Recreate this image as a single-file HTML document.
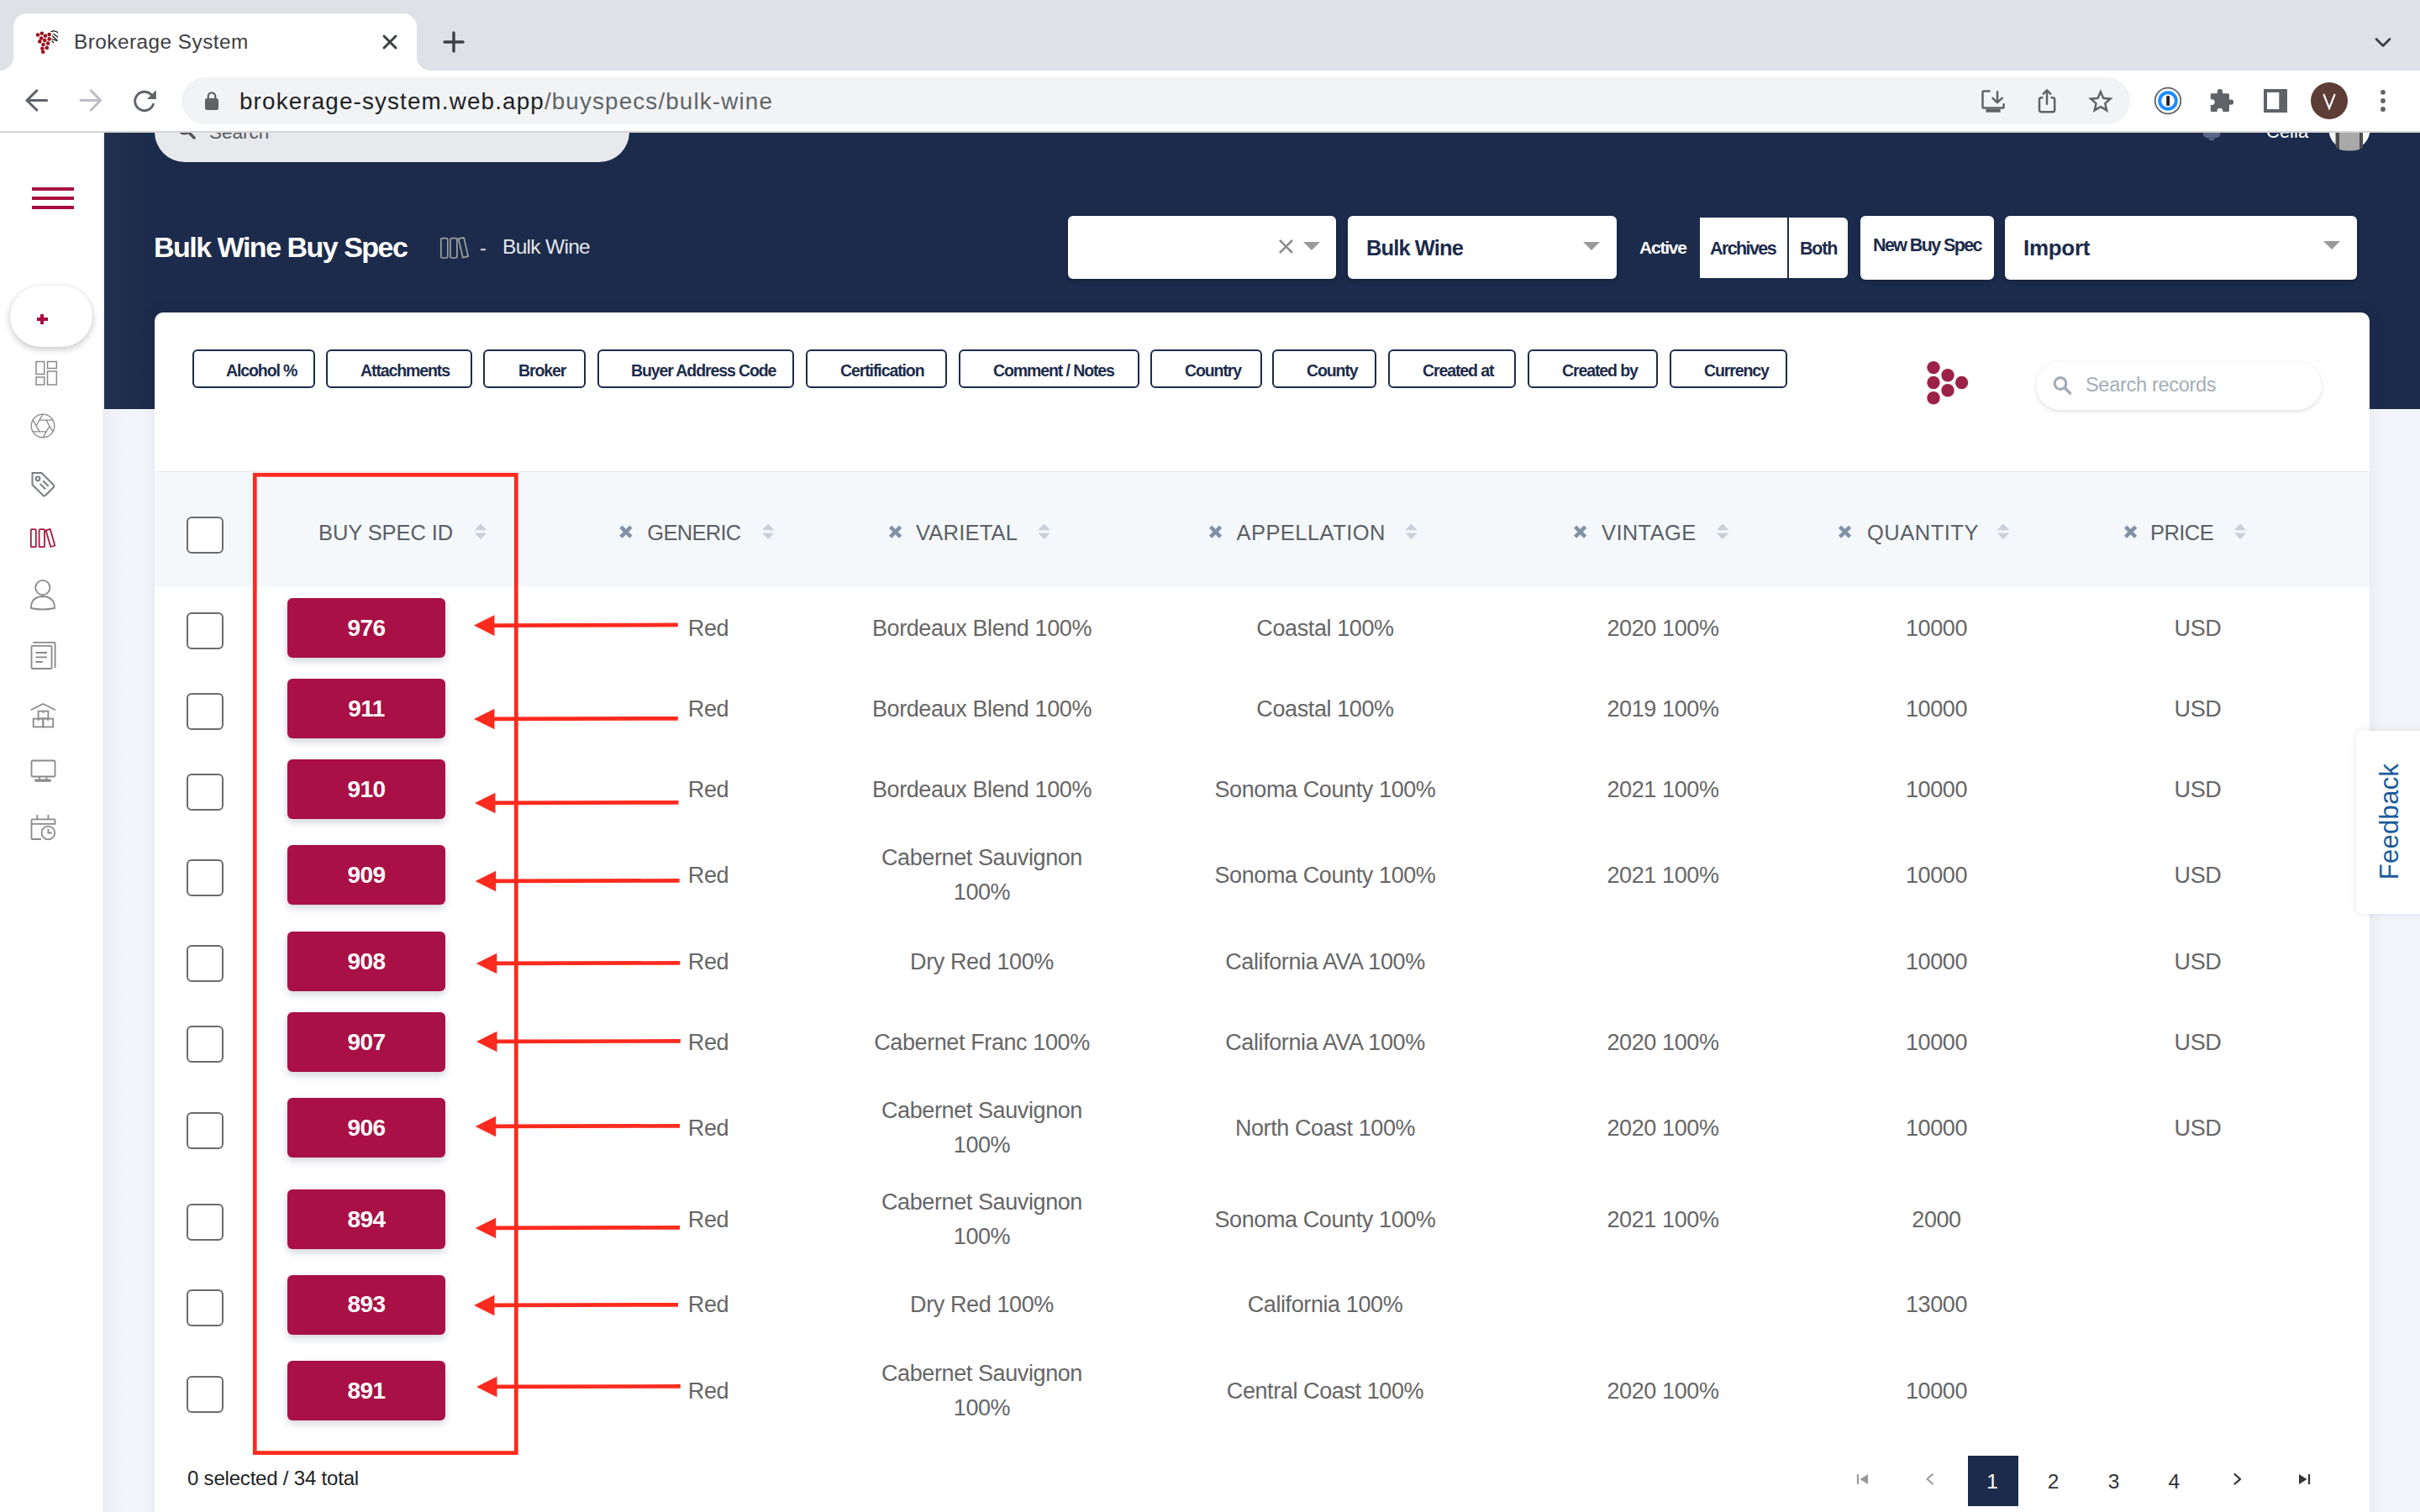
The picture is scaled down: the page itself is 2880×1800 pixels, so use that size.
<!DOCTYPE html>
<html><head><meta charset="utf-8"><title>Brokerage System</title>
<style>
*{box-sizing:border-box;margin:0;padding:0}
html,body{width:2880px;height:1800px;overflow:hidden;background:#fff;font-family:"Liberation Sans",sans-serif}
.a{position:absolute}
.t{position:absolute;white-space:nowrap;line-height:1}
svg{position:absolute;overflow:visible}
</style></head><body>

<!-- ===== CHROME TAB BAR ===== -->
<div class="a" style="left:0;top:0;width:2880px;height:84px;background:#dee1e6"></div>
<div class="a" style="left:16px;top:16px;width:480px;height:68px;background:#fff;border-radius:16px 16px 0 0"></div>
<!-- tab inverse corners -->
<div class="a" style="left:0;top:68px;width:16px;height:16px;background:#fff"></div>
<div class="a" style="left:0;top:68px;width:16px;height:16px;background:#dee1e6;border-radius:0 0 16px 0"></div>
<div class="a" style="left:496px;top:68px;width:16px;height:16px;background:#fff"></div>
<div class="a" style="left:496px;top:68px;width:16px;height:16px;background:#dee1e6;border-radius:0 0 0 16px"></div>

<!-- ===== CHROME TOOLBAR ===== -->
<div class="a" style="left:0;top:84px;width:2880px;height:72px;background:#fff"></div>
<div class="a" style="left:0;top:156px;width:2880px;height:2px;background:#d3d4d6"></div>
<div class="a" style="left:216px;top:92px;width:2319px;height:56px;background:#f1f3f4;border-radius:28px"></div>


<!-- chrome icons -->
<svg style="left:0;top:0" width="2880" height="158" viewBox="0 0 2880 158">
 <g fill="#99121f">
  <circle cx="45" cy="41.5" r="2.3"/><circle cx="49.8" cy="39.8" r="2.3"/><circle cx="53.9" cy="42.7" r="2.3"/><circle cx="58.6" cy="41" r="2.3"/>
  <circle cx="49.1" cy="45.5" r="2.3"/><circle cx="53.2" cy="48" r="2.3"/><circle cx="58.6" cy="46.4" r="2.3"/>
  <circle cx="47.3" cy="49.4" r="2.3"/><circle cx="51.5" cy="53" r="2.3"/><circle cx="57" cy="51.6" r="2.3"/>
  <circle cx="50.4" cy="57.8" r="2.3"/><circle cx="55.7" cy="56.9" r="2.3"/><circle cx="51.2" cy="61.7" r="2.3"/>
 </g>
 <g stroke="#111" stroke-width="1.3" fill="none" stroke-linecap="round">
  <path d="M61 37.5 Q65 36 68.5 38.5"/><path d="M64 40.5 L68.5 44"/><path d="M62.5 43 L68 48"/><path d="M62 46.5 L67.5 48.5"/><path d="M62 49 L63.5 50.5"/>
 </g>
 <text x="88" y="58" font-family="Liberation Sans" font-size="24.3" letter-spacing="0.5" fill="#3c4043">Brokerage System</text>
 <g stroke="#3c4043" stroke-width="3" stroke-linecap="round">
  <path d="M457 43 L471 57 M471 43 L457 57"/>
 </g>
 <g stroke="#3c4043" stroke-width="3.4" stroke-linecap="round">
  <path d="M540 39 V61 M529 50 H551"/>
 </g>
 <path d="M2828 46.5 L2836 54.5 L2844 46.5" stroke="#3c4043" stroke-width="2.8" fill="none" stroke-linecap="round" stroke-linejoin="round"/>
 <!-- nav -->
 <g stroke="#5f6368" stroke-width="3.1" fill="none" stroke-linecap="round" stroke-linejoin="round">
  <path d="M55.6 119.5 H32 M43.8 107.9 L32 119.5 L43.8 131"/>
 </g>
 <g stroke="#bcbec1" stroke-width="3.1" fill="none" stroke-linecap="round" stroke-linejoin="round">
  <path d="M96 119.5 H119.6 M108.3 107.9 L119.6 119.5 L108.3 131"/>
 </g>
 <path d="M182.4 124.3 A11.2 11.2 0 1 1 179.7 112.4" stroke="#5f6368" stroke-width="2.9" fill="none" stroke-linecap="round"/>
 <path d="M185.8 107.2 V117.9 H175 Z" fill="#5f6368"/>
 <!-- lock -->
 <rect x="244" y="117" width="16" height="14" rx="2.5" fill="#5f6368"/>
 <path d="M247.8 118 V114.5 A4.2 4.2 0 0 1 256.2 114.5 V118" stroke="#5f6368" stroke-width="2.3" fill="none"/>
 <text x="285" y="130" font-family="Liberation Sans" font-size="27.8" letter-spacing="1.15" fill="#202124">brokerage-system.web.app<tspan fill="#5f6368">/buyspecs/bulk-wine</tspan></text>
 <!-- download -->
 <g stroke="#5f6368" stroke-width="2.5" fill="none" stroke-linecap="butt" stroke-linejoin="round">
  <path d="M2368.6 108.5 H2361 Q2359.5 108.5 2359.5 110 V127.3 Q2359.5 128.6 2361 128.6 H2383.3 Q2384.6 128.6 2384.6 127.3 V123.3"/>
  <path d="M2377 108.2 V121.5 M2370.8 116.2 L2377 122.2 L2383.4 116.2"/>
 </g>
 <path d="M2363.5 129.8 H2380.6 V133.7 H2363.5 Z" fill="#5f6368"/>
 <!-- share -->
 <g stroke="#5f6368" stroke-width="2.5" fill="none" stroke-linecap="round" stroke-linejoin="round">
  <path d="M2430.5 116.2 H2429.5 Q2427 116.2 2427 118.7 V130.7 Q2427 133.2 2429.5 133.2 H2442.7 Q2445.2 133.2 2445.2 130.7 V118.7 Q2445.2 116.2 2442.7 116.2 H2441.6"/>
  <path d="M2436 107.6 V123.8 M2431.7 111.7 L2436 107.4 L2440.3 111.7"/>
 </g>
 <!-- star -->
 <path d="M2499.90 105.90 L2504.01 115.74 L2514.64 116.61 L2506.56 123.56 L2509.01 133.94 L2499.90 128.40 L2490.79 133.94 L2493.24 123.56 L2485.16 116.61 L2495.79 115.74 Z M2499.90 112.50 L2502.43 117.92 L2508.36 118.65 L2503.99 122.73 L2505.13 128.60 L2499.90 125.70 L2494.67 128.60 L2495.81 122.73 L2491.44 118.65 L2497.37 117.92 Z" fill="#5f6368" fill-rule="evenodd"/>
 <!-- 1password -->
 <circle cx="2580" cy="120" r="15.3" stroke="#5f6368" stroke-width="1.8" fill="#fff"/>
 <circle cx="2580" cy="120" r="9.8" stroke="#1a8cff" stroke-width="3.9" fill="#fff"/>
 <rect x="2578.2" y="114.2" width="3.8" height="11.6" fill="#222"/>
 <!-- puzzle -->
 <path d="M2632 111.2 H2638.7 V109.2 A3.2 3.2 0 0 1 2645.1 109.2 V111.2 H2651.5 Q2653 111.2 2653 112.7 V118.4 H2655 A3.2 3.2 0 0 1 2655 124.8 H2653 V131.5 Q2653 133 2651.5 133 H2645.3 V132.2 A3.4 3.4 0 0 0 2638.5 132.2 V133 H2632.3 Q2630.8 133 2630.8 131.5 V125 H2632.3 A3.4 3.4 0 0 0 2632.3 118.2 H2630.8 V112.5 Q2630.8 111.2 2632 111.2 Z" fill="#5f6368"/>
 <!-- side panel -->
 <path d="M2694 106 H2722 V134 H2694 Z M2698 110 V130 H2712.3 V110 Z" fill="#5f6368" fill-rule="evenodd"/>
 <!-- avatar -->
 <circle cx="2772" cy="120" r="22" fill="#5d3d35"/>
 <path d="M2765.3 112 L2772 128.8 L2778.7 112" stroke="#fff" stroke-width="2.2" fill="none" stroke-linecap="butt" stroke-linejoin="miter"/>
 <g fill="#5f6368"><circle cx="2836" cy="109.8" r="2.9"/><circle cx="2836" cy="120" r="2.9"/><circle cx="2836" cy="130" r="2.9"/></g>
</svg>

<!-- ===== PAGE ===== -->
<div class="a" style="left:0;top:0;width:2880px;height:1800px;clip-path:inset(158px 0 0 0)">
<div class="a" style="left:0;top:158px;width:124px;height:1642px;background:#fff"></div>
<div class="a" style="left:122px;top:158px;width:2px;height:1642px;background:#f0f1f3"></div>
<div class="a" style="left:124px;top:100px;width:2756px;height:387px;background:#1c2b4b"></div>
<div class="a" style="left:124px;top:158px;width:60px;height:329px;background:linear-gradient(90deg,#22304f,#1c2b4b)"></div>
<div class="a" style="left:124px;top:487px;width:2756px;height:1313px;background:#f4f5fa"></div>
<div class="a" style="left:124px;top:487px;width:24px;height:1313px;background:linear-gradient(90deg,rgba(20,30,70,0.035),rgba(20,30,70,0))"></div>

<!-- top search pill (clipped) -->
<div class="a" style="left:184px;top:120px;width:565px;height:73px;background:#e8e9ed;border-radius:36px"></div>
<svg style="left:0;top:0" width="2880" height="200">
 <circle cx="219.5" cy="152" r="7" stroke="#555" stroke-width="3.2" fill="none"/>
 <path d="M224.5 157.5 L231 164" stroke="#555" stroke-width="3.6" stroke-linecap="round"/>
 <text x="249" y="164.5" font-family="Liberation Sans" font-size="22.5" fill="#5a5a5a">Search</text>
 <!-- bell -->
 <path d="M2622 160 Q2622 164.5 2632 164.5 Q2642.5 164.5 2642.5 160 L2642.5 150 H2622 Z" fill="#566789"/>
 <path d="M2628 165 Q2632 170 2636 165 Z" fill="#566789"/>
 <text x="2697" y="164" font-family="Liberation Sans" font-size="22" fill="#fff">Celia</text>
 <circle cx="2796" cy="154" r="24.5" fill="#fff"/>
 <path d="M2779.5 150 H2812 V176 Q2796 181 2779.5 176 Z" fill="#4d4d4d"/>
 <path d="M2784 156 Q2796 150 2808 156 V178 Q2796 181 2784 178 Z" fill="#a9a9a9"/>
</svg>

<!-- hamburger -->
<div class="a" style="left:38px;top:223px;width:50px;height:4px;background:#a80d40"></div>
<div class="a" style="left:38px;top:234px;width:50px;height:4px;background:#a80d40"></div>
<div class="a" style="left:38px;top:245px;width:50px;height:4px;background:#a80d40"></div>
<!-- plus pill -->
<div class="a" style="left:12px;top:340px;width:98px;height:73px;background:#fff;border-radius:37px;box-shadow:0 3px 8px rgba(0,0,0,0.22),0 0 2px rgba(0,0,0,0.06)"></div>
<div class="a" style="left:44px;top:378px;width:12.7px;height:4.4px;background:#a80d40"></div>
<div class="a" style="left:48.3px;top:374px;width:4.2px;height:12px;background:#a80d40"></div>

<!-- sidebar icons -->
<svg style="left:0;top:0" width="124" height="1100">
 <g stroke="#8a8a8a" stroke-width="1.5" fill="none">
  <rect x="43" y="430.5" width="9.7" height="15"/><rect x="56.5" y="430.5" width="10.8" height="8"/>
  <rect x="43" y="449" width="9.7" height="9"/><rect x="56.5" y="442" width="10.8" height="16"/>
 </g>
 <g stroke="#8a8a8a" stroke-width="1.3" fill="none">
  <circle cx="51" cy="507" r="13.8"/>
  <path d="M51 493.2 L43.1 506.5 M62.9 500.1 L47.2 500.1 M62.9 513.9 L55 500.4 M51 520.8 L58.9 507.5 M39.1 513.9 L54.8 513.9 M39.1 500.1 L47 513.6"/>
 </g>
 <g stroke="#777c80" stroke-width="2" fill="none" stroke-linejoin="round" stroke-linecap="round">
  <path d="M38.5 563 H49.5 L64 577.5 Q65 578.7 64 579.8 L53.8 590 Q52.6 591 51.5 590 L38.5 577 Z"/>
  <circle cx="45" cy="569.8" r="2.4"/>
  <path d="M51.8 573 L57.1 578.3 M48.2 576.5 L53.6 581.9"/>
 </g>
 <g stroke="#a8173f" stroke-width="1.8" fill="none" stroke-linejoin="round">
  <rect x="36.8" y="630.2" width="6" height="21" rx="1"/>
  <rect x="46.6" y="630.2" width="6.4" height="21" rx="1"/>
  <path d="M54.6 631.3 L59.7 629.8 L65.4 649.5 L60.3 651 Z"/>
 </g>
 <g stroke="#8a8a8a" stroke-width="1.8" fill="none">
  <circle cx="50.8" cy="699.5" r="8.6"/>
  <path d="M37 724 Q36.8 710.5 50.8 710 Q65 710.5 65 724 Q51 727 37 724 Z"/>
 </g>
 <g stroke="#8a8a8a" stroke-width="1.8" fill="none">
  <rect x="37.5" y="768.8" width="24" height="27.2" rx="1.2"/>
  <path d="M39.2 764.8 H64.5 Q65.6 764.8 65.6 766 V795"/>
  <path d="M42.4 777 H56 M42.4 782.4 H56 M42.4 788 H50.8"/>
 </g>
 <g stroke="#8a8a8a" stroke-width="1.8" fill="none">
  <path d="M36.6 845.2 L51.3 837.9 L66 845.2"/>
  <rect x="45.6" y="846.6" width="11.8" height="8.8"/>
  <rect x="39.7" y="855.6" width="11.6" height="9.8"/><rect x="51.3" y="855.6" width="11.9" height="9.8"/>
  <path d="M51.5 846.6 V849 M45.5 855.6 V858 M57.2 855.6 V858"/>
 </g>
 <g stroke="#8a8a8a" stroke-width="1.8" fill="none">
  <rect x="37.5" y="905.5" width="28" height="19" rx="1.5"/>
  <path d="M47 924.4 V928 M55.4 924.4 V928"/>
 </g>
 <rect x="41" y="927.5" width="20" height="3.2" rx="1.6" fill="#8a8a8a"/>
 <g stroke="#8a8a8a" stroke-width="1.8" fill="none">
  <path d="M48.9 999 H38.5 Q37.5 999 37.5 998 V976.5 Q37.5 975.3 38.7 975.3 H64.3 Q65.5 975.3 65.5 976.5 V980.8 H37.5"/>
  <path d="M44.3 970 V975 M57.4 970 V975"/>
  <circle cx="57.4" cy="991.5" r="7.8"/>
  <path d="M57.4 987 V991.5 H61.8"/>
 </g>
</svg>

<!-- title area -->
<div class="t" style="left:183px;top:277px;font-size:34px;font-weight:700;color:#fff;letter-spacing:-1.5px">Bulk Wine Buy Spec</div>
<svg style="left:0;top:0" width="800" height="400">
 <g stroke="#9e9e9e" stroke-width="1.7" fill="none" stroke-linejoin="round">
  <rect x="524.8" y="283.6" width="8" height="23.4" rx="1.5"/>
  <rect x="536" y="283.6" width="7.9" height="23.4" rx="1.5"/>
  <path d="M545.6 284.2 L552 282.8 L557.2 305.2 L550.9 306.7 Z"/>
 </g>
 <rect x="572" y="296" width="6" height="2.2" fill="#c9ccd3"/>
</svg>
<div class="t" style="left:598px;top:282px;font-size:24.5px;color:#e4e6ea;letter-spacing:-0.7px">Bulk Wine</div>

<!-- selects -->
<div class="a" style="left:1271px;top:257px;width:319px;height:75px;background:#fff;border-radius:6px;box-shadow:0 3px 6px rgba(0,0,0,0.18)"></div>
<svg style="left:0;top:0" width="2880" height="400">
 <path d="M1523 286 L1538 301 M1538 286 L1523 301" stroke="#8c8c8c" stroke-width="2.6"/>
 <path d="M1551 288 H1571 L1561 298 Z" fill="#9a9a9a"/>
</svg>
<div class="a" style="left:1604px;top:257px;width:320px;height:75px;background:#fff;border-radius:6px;box-shadow:0 3px 6px rgba(0,0,0,0.18)"></div>
<div class="t" style="left:1626px;top:283px;font-size:25.5px;font-weight:700;color:#1c2b4b;letter-spacing:-0.9px">Bulk Wine</div>
<div class="t" style="left:1951px;top:284px;font-size:21px;font-weight:700;color:#fff;letter-spacing:-1.2px">Active</div>
<div class="a" style="left:2023px;top:259px;width:176px;height:72px;background:#fff;border-radius:0 6px 6px 0"></div>
<div class="a" style="left:2127px;top:259px;width:2px;height:72px;background:#1c2b4b"></div>
<div class="t" style="left:2035px;top:286px;font-size:21.5px;font-weight:700;color:#1c2b4b;letter-spacing:-1.6px">Archives</div>
<div class="t" style="left:2142px;top:286px;font-size:21.5px;font-weight:700;color:#1c2b4b;letter-spacing:-1.2px">Both</div>
<div class="a" style="left:2214px;top:257px;width:159px;height:76px;background:#fff;border-radius:6px;box-shadow:0 3px 6px rgba(0,0,0,0.18)"></div>
<div class="t" style="left:2229px;top:282px;font-size:21.5px;font-weight:700;color:#1c2b4b;letter-spacing:-1.6px">New Buy Spec</div>
<div class="a" style="left:2386px;top:257px;width:419px;height:76px;background:#fff;border-radius:6px;box-shadow:0 3px 6px rgba(0,0,0,0.18)"></div>
<div class="t" style="left:2408px;top:282px;font-size:26px;font-weight:700;color:#1c2b4b;letter-spacing:-0.3px">Import</div>
<svg style="left:0;top:0" width="2880" height="400">
 <path d="M2765 287 H2785 L2775 297 Z" fill="#9a9a9a"/>
 <path d="M1884 288 H1904 L1894 298 Z" fill="#9a9a9a"/>
</svg>

<!-- card -->
<div class="a" style="left:184px;top:372px;width:2636px;height:1500px;background:#fff;border-radius:10px;box-shadow:0 0 22px rgba(20,30,70,0.07)"></div>
<div class="a" style="left:184px;top:561px;width:2636px;height:2px;background:#e4e8ed"></div>
<div class="a" style="left:184px;top:562px;width:2636px;height:137px;background:#f5f8fb"></div>

<!-- chips -->
<div class="a" style="left:229px;top:416px;width:146px;height:46px;border:2px solid #1c2b4b;border-radius:6px"></div>
<div class="a" style="left:388px;top:416px;width:174px;height:46px;border:2px solid #1c2b4b;border-radius:6px"></div>
<div class="a" style="left:575px;top:416px;width:122px;height:46px;border:2px solid #1c2b4b;border-radius:6px"></div>
<div class="a" style="left:711px;top:416px;width:234px;height:46px;border:2px solid #1c2b4b;border-radius:6px"></div>
<div class="a" style="left:959px;top:416px;width:168px;height:46px;border:2px solid #1c2b4b;border-radius:6px"></div>
<div class="a" style="left:1141px;top:416px;width:215px;height:46px;border:2px solid #1c2b4b;border-radius:6px"></div>
<div class="a" style="left:1369px;top:416px;width:133px;height:46px;border:2px solid #1c2b4b;border-radius:6px"></div>
<div class="a" style="left:1514px;top:416px;width:124px;height:46px;border:2px solid #1c2b4b;border-radius:6px"></div>
<div class="a" style="left:1652px;top:416px;width:152px;height:46px;border:2px solid #1c2b4b;border-radius:6px"></div>
<div class="a" style="left:1818px;top:416px;width:155px;height:46px;border:2px solid #1c2b4b;border-radius:6px"></div>
<div class="a" style="left:1987px;top:416px;width:140px;height:46px;border:2px solid #1c2b4b;border-radius:6px"></div>
<div class="t" style="left:269px;top:431.5px;font-size:19.5px;font-weight:700;color:#1c2b4b;letter-spacing:-1.1px">Alcohol %</div>
<div class="t" style="left:429px;top:431.5px;font-size:19.5px;font-weight:700;color:#1c2b4b;letter-spacing:-1.1px">Attachments</div>
<div class="t" style="left:617px;top:431.5px;font-size:19.5px;font-weight:700;color:#1c2b4b;letter-spacing:-1.1px">Broker</div>
<div class="t" style="left:751px;top:431.5px;font-size:19.5px;font-weight:700;color:#1c2b4b;letter-spacing:-1.1px">Buyer Address Code</div>
<div class="t" style="left:1000px;top:431.5px;font-size:19.5px;font-weight:700;color:#1c2b4b;letter-spacing:-1.1px">Certification</div>
<div class="t" style="left:1182px;top:431.5px;font-size:19.5px;font-weight:700;color:#1c2b4b;letter-spacing:-1.1px">Comment / Notes</div>
<div class="t" style="left:1410px;top:431.5px;font-size:19.5px;font-weight:700;color:#1c2b4b;letter-spacing:-1.1px">Country</div>
<div class="t" style="left:1555px;top:431.5px;font-size:19.5px;font-weight:700;color:#1c2b4b;letter-spacing:-1.1px">County</div>
<div class="t" style="left:1693px;top:431.5px;font-size:19.5px;font-weight:700;color:#1c2b4b;letter-spacing:-1.1px">Created at</div>
<div class="t" style="left:1859px;top:431.5px;font-size:19.5px;font-weight:700;color:#1c2b4b;letter-spacing:-1.1px">Created by</div>
<div class="t" style="left:2028px;top:431.5px;font-size:19.5px;font-weight:700;color:#1c2b4b;letter-spacing:-1.1px">Currency</div>

<!-- grape logo + search records -->
<svg style="left:0;top:0" width="2880" height="600">
 <g fill="#9c2148">
  <circle cx="2301" cy="437.6" r="7.7"/><circle cx="2318" cy="446.7" r="7.7"/><circle cx="2301" cy="455.5" r="7.7"/>
  <circle cx="2334.6" cy="455.5" r="7.7"/><circle cx="2318" cy="464.7" r="7.7"/><circle cx="2301" cy="473.8" r="7.7"/>
 </g>
</svg>
<div class="a" style="left:2423px;top:430px;width:340px;height:58px;background:#fff;border-radius:29px;box-shadow:0 2px 5px rgba(0,0,0,0.12),0 0 1px rgba(0,0,0,0.08)"></div>
<svg style="left:0;top:0" width="2880" height="600">
 <circle cx="2452" cy="456.5" r="6.8" stroke="#a3adb7" stroke-width="3.2" fill="none"/>
 <path d="M2457 461.5 L2463.5 468" stroke="#a3adb7" stroke-width="3.6" stroke-linecap="round"/>
</svg>
<div class="t" style="left:2482px;top:447px;font-size:23.5px;color:#a3adb7;letter-spacing:-0.3px">Search records</div>
<!-- table header -->
<div class="a" style="left:222px;top:615px;width:44px;height:44px;border:2.2px solid #6b6b6b;border-radius:6px;background:#fff"></div>
<div class="t" style="left:379px;top:621.5px;font-size:25.5px;color:#5a5f66;letter-spacing:-0.1px">BUY SPEC ID</div>
<div class="t" style="left:770.3px;top:621.5px;font-size:25.5px;color:#5a5f66;letter-spacing:-0.7px">GENERIC</div>
<div class="t" style="left:1090px;top:621.5px;font-size:25.5px;color:#5a5f66;letter-spacing:0.2px">VARIETAL</div>
<div class="t" style="left:1471.5px;top:621.5px;font-size:25.5px;color:#5a5f66;letter-spacing:0.45px">APPELLATION</div>
<div class="t" style="left:1906px;top:621.5px;font-size:25.5px;color:#5a5f66;letter-spacing:0.37px">VINTAGE</div>
<div class="t" style="left:2222px;top:621.5px;font-size:25.5px;color:#5a5f66;letter-spacing:0.5px">QUANTITY</div>
<div class="t" style="left:2559px;top:621.5px;font-size:25.5px;color:#5a5f66;letter-spacing:-0.55px">PRICE</div>
<svg style="left:0;top:0" width="2880" height="700">
<path d="M572.1 623.6 L578.7 630.4 Q579.5 631.2 578.3000000000001 631.2 H565.9 Q564.7 631.2 565.5 630.4 Z" fill="#c9d0da"/>
<path d="M572.1 642 L578.7 635.2 Q579.5 634.4 578.3000000000001 634.4 H565.9 Q564.7 634.4 565.5 635.2 Z" fill="#c9d0da"/>
<path d="M738.9 627.2 L750.9 639.2 M750.9 627.2 L738.9 639.2" stroke="#8292a6" stroke-width="4.6" stroke-linecap="butt"/>
<path d="M914.1 623.6 L920.7 630.4 Q921.5 631.2 920.3000000000001 631.2 H907.9 Q906.7 631.2 907.5 630.4 Z" fill="#c9d0da"/>
<path d="M914.1 642 L920.7 635.2 Q921.5 634.4 920.3000000000001 634.4 H907.9 Q906.7 634.4 907.5 635.2 Z" fill="#c9d0da"/>
<path d="M1059.6 627.2 L1071.6 639.2 M1071.6 627.2 L1059.6 639.2" stroke="#8292a6" stroke-width="4.6" stroke-linecap="butt"/>
<path d="M1242.6 623.6 L1249.1999999999998 630.4 Q1250.0 631.2 1248.8 631.2 H1236.3999999999999 Q1235.1999999999998 631.2 1236.0 630.4 Z" fill="#c9d0da"/>
<path d="M1242.6 642 L1249.1999999999998 635.2 Q1250.0 634.4 1248.8 634.4 H1236.3999999999999 Q1235.1999999999998 634.4 1236.0 635.2 Z" fill="#c9d0da"/>
<path d="M1440.6 627.2 L1452.6 639.2 M1452.6 627.2 L1440.6 639.2" stroke="#8292a6" stroke-width="4.6" stroke-linecap="butt"/>
<path d="M1679.6 623.6 L1686.1999999999998 630.4 Q1687.0 631.2 1685.8 631.2 H1673.3999999999999 Q1672.1999999999998 631.2 1673.0 630.4 Z" fill="#c9d0da"/>
<path d="M1679.6 642 L1686.1999999999998 635.2 Q1687.0 634.4 1685.8 634.4 H1673.3999999999999 Q1672.1999999999998 634.4 1673.0 635.2 Z" fill="#c9d0da"/>
<path d="M1874.6 627.2 L1886.6 639.2 M1886.6 627.2 L1874.6 639.2" stroke="#8292a6" stroke-width="4.6" stroke-linecap="butt"/>
<path d="M2050.1 623.6 L2056.7 630.4 Q2057.5 631.2 2056.2999999999997 631.2 H2043.8999999999999 Q2042.6999999999998 631.2 2043.5 630.4 Z" fill="#c9d0da"/>
<path d="M2050.1 642 L2056.7 635.2 Q2057.5 634.4 2056.2999999999997 634.4 H2043.8999999999999 Q2042.6999999999998 634.4 2043.5 635.2 Z" fill="#c9d0da"/>
<path d="M2189.6 627.2 L2201.6 639.2 M2201.6 627.2 L2189.6 639.2" stroke="#8292a6" stroke-width="4.6" stroke-linecap="butt"/>
<path d="M2384.1 623.6 L2390.7 630.4 Q2391.5 631.2 2390.2999999999997 631.2 H2377.9 Q2376.7 631.2 2377.5 630.4 Z" fill="#c9d0da"/>
<path d="M2384.1 642 L2390.7 635.2 Q2391.5 634.4 2390.2999999999997 634.4 H2377.9 Q2376.7 634.4 2377.5 635.2 Z" fill="#c9d0da"/>
<path d="M2529.6 627.2 L2541.6 639.2 M2541.6 627.2 L2529.6 639.2" stroke="#8292a6" stroke-width="4.6" stroke-linecap="butt"/>
<path d="M2666.1 623.6 L2672.7 630.4 Q2673.5 631.2 2672.2999999999997 631.2 H2659.9 Q2658.7 631.2 2659.5 630.4 Z" fill="#c9d0da"/>
<path d="M2666.1 642 L2672.7 635.2 Q2673.5 634.4 2672.2999999999997 634.4 H2659.9 Q2658.7 634.4 2659.5 635.2 Z" fill="#c9d0da"/>
</svg>
<!-- rows -->
<div class="a" style="left:222px;top:729px;width:44px;height:44px;border:2.2px solid #6b6b6b;border-radius:6px;background:#fff"></div>
<div class="a" style="left:342px;top:712px;width:188px;height:71px;background:#a81046;border-radius:6px;box-shadow:0 4px 10px rgba(30,40,70,0.2)"></div>
<div class="t" style="left:336px;width:200px;text-align:center;top:733.7px;font-size:28px;font-weight:700;color:#fff;letter-spacing:-0.6px">976</div>
<div class="t" style="left:543px;width:600px;text-align:center;top:734.5px;font-size:27px;color:#666;letter-spacing:-0.4px">Red</div>
<div class="t" style="left:868.5px;width:600px;text-align:center;top:734.5px;font-size:27px;color:#666;letter-spacing:-0.4px">Bordeaux Blend 100%</div>
<div class="t" style="left:1277px;width:600px;text-align:center;top:734.5px;font-size:27px;color:#666;letter-spacing:-0.4px">Coastal 100%</div>
<div class="t" style="left:1679px;width:600px;text-align:center;top:734.5px;font-size:27px;color:#666;letter-spacing:-0.4px">2020 100%</div>
<div class="t" style="left:2004.5px;width:600px;text-align:center;top:734.5px;font-size:27px;color:#666;letter-spacing:-0.4px">10000</div>
<div class="t" style="left:2315.5px;width:600px;text-align:center;top:734.5px;font-size:27px;color:#666;letter-spacing:-0.4px">USD</div>
<div class="a" style="left:222px;top:825px;width:44px;height:44px;border:2.2px solid #6b6b6b;border-radius:6px;background:#fff"></div>
<div class="a" style="left:342px;top:808px;width:188px;height:71px;background:#a81046;border-radius:6px;box-shadow:0 4px 10px rgba(30,40,70,0.2)"></div>
<div class="t" style="left:336px;width:200px;text-align:center;top:829.7px;font-size:28px;font-weight:700;color:#fff;letter-spacing:-0.6px">911</div>
<div class="t" style="left:543px;width:600px;text-align:center;top:830.5px;font-size:27px;color:#666;letter-spacing:-0.4px">Red</div>
<div class="t" style="left:868.5px;width:600px;text-align:center;top:830.5px;font-size:27px;color:#666;letter-spacing:-0.4px">Bordeaux Blend 100%</div>
<div class="t" style="left:1277px;width:600px;text-align:center;top:830.5px;font-size:27px;color:#666;letter-spacing:-0.4px">Coastal 100%</div>
<div class="t" style="left:1679px;width:600px;text-align:center;top:830.5px;font-size:27px;color:#666;letter-spacing:-0.4px">2019 100%</div>
<div class="t" style="left:2004.5px;width:600px;text-align:center;top:830.5px;font-size:27px;color:#666;letter-spacing:-0.4px">10000</div>
<div class="t" style="left:2315.5px;width:600px;text-align:center;top:830.5px;font-size:27px;color:#666;letter-spacing:-0.4px">USD</div>
<div class="a" style="left:222px;top:921px;width:44px;height:44px;border:2.2px solid #6b6b6b;border-radius:6px;background:#fff"></div>
<div class="a" style="left:342px;top:904px;width:188px;height:71px;background:#a81046;border-radius:6px;box-shadow:0 4px 10px rgba(30,40,70,0.2)"></div>
<div class="t" style="left:336px;width:200px;text-align:center;top:925.7px;font-size:28px;font-weight:700;color:#fff;letter-spacing:-0.6px">910</div>
<div class="t" style="left:543px;width:600px;text-align:center;top:926.5px;font-size:27px;color:#666;letter-spacing:-0.4px">Red</div>
<div class="t" style="left:868.5px;width:600px;text-align:center;top:926.5px;font-size:27px;color:#666;letter-spacing:-0.4px">Bordeaux Blend 100%</div>
<div class="t" style="left:1277px;width:600px;text-align:center;top:926.5px;font-size:27px;color:#666;letter-spacing:-0.4px">Sonoma County 100%</div>
<div class="t" style="left:1679px;width:600px;text-align:center;top:926.5px;font-size:27px;color:#666;letter-spacing:-0.4px">2021 100%</div>
<div class="t" style="left:2004.5px;width:600px;text-align:center;top:926.5px;font-size:27px;color:#666;letter-spacing:-0.4px">10000</div>
<div class="t" style="left:2315.5px;width:600px;text-align:center;top:926.5px;font-size:27px;color:#666;letter-spacing:-0.4px">USD</div>
<div class="a" style="left:222px;top:1023px;width:44px;height:44px;border:2.2px solid #6b6b6b;border-radius:6px;background:#fff"></div>
<div class="a" style="left:342px;top:1006px;width:188px;height:71px;background:#a81046;border-radius:6px;box-shadow:0 4px 10px rgba(30,40,70,0.2)"></div>
<div class="t" style="left:336px;width:200px;text-align:center;top:1027.7px;font-size:28px;font-weight:700;color:#fff;letter-spacing:-0.6px">909</div>
<div class="t" style="left:543px;width:600px;text-align:center;top:1028.5px;font-size:27px;color:#666;letter-spacing:-0.4px">Red</div>
<div class="t" style="left:868.5px;width:600px;text-align:center;top:1008.0px;font-size:27px;color:#666;letter-spacing:-0.4px">Cabernet Sauvignon</div>
<div class="t" style="left:868.5px;width:600px;text-align:center;top:1049.2px;font-size:27px;color:#666;letter-spacing:-0.4px">100%</div>
<div class="t" style="left:1277px;width:600px;text-align:center;top:1028.5px;font-size:27px;color:#666;letter-spacing:-0.4px">Sonoma County 100%</div>
<div class="t" style="left:1679px;width:600px;text-align:center;top:1028.5px;font-size:27px;color:#666;letter-spacing:-0.4px">2021 100%</div>
<div class="t" style="left:2004.5px;width:600px;text-align:center;top:1028.5px;font-size:27px;color:#666;letter-spacing:-0.4px">10000</div>
<div class="t" style="left:2315.5px;width:600px;text-align:center;top:1028.5px;font-size:27px;color:#666;letter-spacing:-0.4px">USD</div>
<div class="a" style="left:222px;top:1125px;width:44px;height:44px;border:2.2px solid #6b6b6b;border-radius:6px;background:#fff"></div>
<div class="a" style="left:342px;top:1109px;width:188px;height:71px;background:#a81046;border-radius:6px;box-shadow:0 4px 10px rgba(30,40,70,0.2)"></div>
<div class="t" style="left:336px;width:200px;text-align:center;top:1130.7px;font-size:28px;font-weight:700;color:#fff;letter-spacing:-0.6px">908</div>
<div class="t" style="left:543px;width:600px;text-align:center;top:1131.5px;font-size:27px;color:#666;letter-spacing:-0.4px">Red</div>
<div class="t" style="left:868.5px;width:600px;text-align:center;top:1131.5px;font-size:27px;color:#666;letter-spacing:-0.4px">Dry Red 100%</div>
<div class="t" style="left:1277px;width:600px;text-align:center;top:1131.5px;font-size:27px;color:#666;letter-spacing:-0.4px">California AVA 100%</div>
<div class="t" style="left:2004.5px;width:600px;text-align:center;top:1131.5px;font-size:27px;color:#666;letter-spacing:-0.4px">10000</div>
<div class="t" style="left:2315.5px;width:600px;text-align:center;top:1131.5px;font-size:27px;color:#666;letter-spacing:-0.4px">USD</div>
<div class="a" style="left:222px;top:1221px;width:44px;height:44px;border:2.2px solid #6b6b6b;border-radius:6px;background:#fff"></div>
<div class="a" style="left:342px;top:1205px;width:188px;height:71px;background:#a81046;border-radius:6px;box-shadow:0 4px 10px rgba(30,40,70,0.2)"></div>
<div class="t" style="left:336px;width:200px;text-align:center;top:1226.7px;font-size:28px;font-weight:700;color:#fff;letter-spacing:-0.6px">907</div>
<div class="t" style="left:543px;width:600px;text-align:center;top:1227.5px;font-size:27px;color:#666;letter-spacing:-0.4px">Red</div>
<div class="t" style="left:868.5px;width:600px;text-align:center;top:1227.5px;font-size:27px;color:#666;letter-spacing:-0.4px">Cabernet Franc 100%</div>
<div class="t" style="left:1277px;width:600px;text-align:center;top:1227.5px;font-size:27px;color:#666;letter-spacing:-0.4px">California AVA 100%</div>
<div class="t" style="left:1679px;width:600px;text-align:center;top:1227.5px;font-size:27px;color:#666;letter-spacing:-0.4px">2020 100%</div>
<div class="t" style="left:2004.5px;width:600px;text-align:center;top:1227.5px;font-size:27px;color:#666;letter-spacing:-0.4px">10000</div>
<div class="t" style="left:2315.5px;width:600px;text-align:center;top:1227.5px;font-size:27px;color:#666;letter-spacing:-0.4px">USD</div>
<div class="a" style="left:222px;top:1324px;width:44px;height:44px;border:2.2px solid #6b6b6b;border-radius:6px;background:#fff"></div>
<div class="a" style="left:342px;top:1307px;width:188px;height:71px;background:#a81046;border-radius:6px;box-shadow:0 4px 10px rgba(30,40,70,0.2)"></div>
<div class="t" style="left:336px;width:200px;text-align:center;top:1328.7px;font-size:28px;font-weight:700;color:#fff;letter-spacing:-0.6px">906</div>
<div class="t" style="left:543px;width:600px;text-align:center;top:1329.5px;font-size:27px;color:#666;letter-spacing:-0.4px">Red</div>
<div class="t" style="left:868.5px;width:600px;text-align:center;top:1309.0px;font-size:27px;color:#666;letter-spacing:-0.4px">Cabernet Sauvignon</div>
<div class="t" style="left:868.5px;width:600px;text-align:center;top:1350.2px;font-size:27px;color:#666;letter-spacing:-0.4px">100%</div>
<div class="t" style="left:1277px;width:600px;text-align:center;top:1329.5px;font-size:27px;color:#666;letter-spacing:-0.4px">North Coast 100%</div>
<div class="t" style="left:1679px;width:600px;text-align:center;top:1329.5px;font-size:27px;color:#666;letter-spacing:-0.4px">2020 100%</div>
<div class="t" style="left:2004.5px;width:600px;text-align:center;top:1329.5px;font-size:27px;color:#666;letter-spacing:-0.4px">10000</div>
<div class="t" style="left:2315.5px;width:600px;text-align:center;top:1329.5px;font-size:27px;color:#666;letter-spacing:-0.4px">USD</div>
<div class="a" style="left:222px;top:1433px;width:44px;height:44px;border:2.2px solid #6b6b6b;border-radius:6px;background:#fff"></div>
<div class="a" style="left:342px;top:1416px;width:188px;height:71px;background:#a81046;border-radius:6px;box-shadow:0 4px 10px rgba(30,40,70,0.2)"></div>
<div class="t" style="left:336px;width:200px;text-align:center;top:1437.7px;font-size:28px;font-weight:700;color:#fff;letter-spacing:-0.6px">894</div>
<div class="t" style="left:543px;width:600px;text-align:center;top:1438.5px;font-size:27px;color:#666;letter-spacing:-0.4px">Red</div>
<div class="t" style="left:868.5px;width:600px;text-align:center;top:1418.0px;font-size:27px;color:#666;letter-spacing:-0.4px">Cabernet Sauvignon</div>
<div class="t" style="left:868.5px;width:600px;text-align:center;top:1459.2px;font-size:27px;color:#666;letter-spacing:-0.4px">100%</div>
<div class="t" style="left:1277px;width:600px;text-align:center;top:1438.5px;font-size:27px;color:#666;letter-spacing:-0.4px">Sonoma County 100%</div>
<div class="t" style="left:1679px;width:600px;text-align:center;top:1438.5px;font-size:27px;color:#666;letter-spacing:-0.4px">2021 100%</div>
<div class="t" style="left:2004.5px;width:600px;text-align:center;top:1438.5px;font-size:27px;color:#666;letter-spacing:-0.4px">2000</div>
<div class="a" style="left:222px;top:1534.5px;width:44px;height:44px;border:2.2px solid #6b6b6b;border-radius:6px;background:#fff"></div>
<div class="a" style="left:342px;top:1517.5px;width:188px;height:71px;background:#a81046;border-radius:6px;box-shadow:0 4px 10px rgba(30,40,70,0.2)"></div>
<div class="t" style="left:336px;width:200px;text-align:center;top:1539.2px;font-size:28px;font-weight:700;color:#fff;letter-spacing:-0.6px">893</div>
<div class="t" style="left:543px;width:600px;text-align:center;top:1540.0px;font-size:27px;color:#666;letter-spacing:-0.4px">Red</div>
<div class="t" style="left:868.5px;width:600px;text-align:center;top:1540.0px;font-size:27px;color:#666;letter-spacing:-0.4px">Dry Red 100%</div>
<div class="t" style="left:1277px;width:600px;text-align:center;top:1540.0px;font-size:27px;color:#666;letter-spacing:-0.4px">California 100%</div>
<div class="t" style="left:2004.5px;width:600px;text-align:center;top:1540.0px;font-size:27px;color:#666;letter-spacing:-0.4px">13000</div>
<div class="a" style="left:222px;top:1638px;width:44px;height:44px;border:2.2px solid #6b6b6b;border-radius:6px;background:#fff"></div>
<div class="a" style="left:342px;top:1620px;width:188px;height:71px;background:#a81046;border-radius:6px;box-shadow:0 4px 10px rgba(30,40,70,0.2)"></div>
<div class="t" style="left:336px;width:200px;text-align:center;top:1641.7px;font-size:28px;font-weight:700;color:#fff;letter-spacing:-0.6px">891</div>
<div class="t" style="left:543px;width:600px;text-align:center;top:1642.5px;font-size:27px;color:#666;letter-spacing:-0.4px">Red</div>
<div class="t" style="left:868.5px;width:600px;text-align:center;top:1622.0px;font-size:27px;color:#666;letter-spacing:-0.4px">Cabernet Sauvignon</div>
<div class="t" style="left:868.5px;width:600px;text-align:center;top:1663.2px;font-size:27px;color:#666;letter-spacing:-0.4px">100%</div>
<div class="t" style="left:1277px;width:600px;text-align:center;top:1642.5px;font-size:27px;color:#666;letter-spacing:-0.4px">Central Coast 100%</div>
<div class="t" style="left:1679px;width:600px;text-align:center;top:1642.5px;font-size:27px;color:#666;letter-spacing:-0.4px">2020 100%</div>
<div class="t" style="left:2004.5px;width:600px;text-align:center;top:1642.5px;font-size:27px;color:#666;letter-spacing:-0.4px">10000</div>
<!-- annotations -->
<svg style="left:0;top:0" width="2880" height="1800">
<rect x="303.3" y="565.3" width="311" height="1164.3" stroke="#fd2a1e" stroke-width="4.7" fill="none"/>
<path d="M587.5 742.2 L806.8 741.6 V746.3 L587.5 746.9 Z" fill="#fd2a1e"/>
<path d="M564 744.6 L588.5 732.3 V756.9 Z" fill="#fd2a1e"/>
<path d="M587.5 853.6 L806.8 853.0 V857.7 L587.5 858.3 Z" fill="#fd2a1e"/>
<path d="M564 856.0 L588.5 843.7 V868.3 Z" fill="#fd2a1e"/>
<path d="M588.5 953.6 L807.5 953.0 V957.7 L588.5 958.3 Z" fill="#fd2a1e"/>
<path d="M565 956.0 L589.5 943.7 V968.3 Z" fill="#fd2a1e"/>
<path d="M589.2 1046.6 L808.6 1046.0 V1050.7 L589.2 1051.3 Z" fill="#fd2a1e"/>
<path d="M565.7 1049.0 L590.2 1036.7 V1061.3 Z" fill="#fd2a1e"/>
<path d="M590.3 1144.6 L809.3 1144.0 V1148.7 L590.3 1149.3 Z" fill="#fd2a1e"/>
<path d="M566.8 1147.0 L591.3 1134.7 V1159.3 Z" fill="#fd2a1e"/>
<path d="M590.5 1237.6 L809.8 1237.0 V1241.7 L590.5 1242.3 Z" fill="#fd2a1e"/>
<path d="M567 1240.0 L591.5 1227.7 V1252.3 Z" fill="#fd2a1e"/>
<path d="M589.2 1338.6 L809 1338.0 V1342.7 L589.2 1343.3 Z" fill="#fd2a1e"/>
<path d="M565.7 1341.0 L590.2 1328.7 V1353.3 Z" fill="#fd2a1e"/>
<path d="M589.2 1459.6 L809 1459.0 V1463.7 L589.2 1464.3 Z" fill="#fd2a1e"/>
<path d="M565.7 1462.0 L590.2 1449.7 V1474.3 Z" fill="#fd2a1e"/>
<path d="M587.5 1551.6 L807 1551.0 V1555.7 L587.5 1556.3 Z" fill="#fd2a1e"/>
<path d="M564 1554.0 L588.5 1541.7 V1566.3 Z" fill="#fd2a1e"/>
<path d="M590.5 1648.6 L809.8 1648.0 V1652.7 L590.5 1653.3 Z" fill="#fd2a1e"/>
<path d="M567 1651.0 L591.5 1638.7 V1663.3 Z" fill="#fd2a1e"/>
</svg>
<div class="t" style="left:223px;top:1747.6px;font-size:24px;color:#222;letter-spacing:-0.2px">0 selected / 34 total</div>
<div class="a" style="left:2342px;top:1733px;width:60px;height:60px;background:#1c2b4b"></div>
<div class="t" style="left:2341px;width:60px;text-align:center;top:1752.2px;font-size:24.5px;color:#fff">1</div>
<div class="t" style="left:2413.5px;width:60px;text-align:center;top:1752.2px;font-size:24.5px;color:#333">2</div>
<div class="t" style="left:2485.6px;width:60px;text-align:center;top:1752.2px;font-size:24.5px;color:#333">3</div>
<div class="t" style="left:2557.4px;width:60px;text-align:center;top:1752.2px;font-size:24.5px;color:#333">4</div>
<svg style="left:0;top:0" width="2880" height="1800">
 <path d="M2211 1755 V1767" stroke="#999" stroke-width="2.2"/>
 <path d="M2223 1755 L2213.5 1761 L2223 1767 Z" fill="#999"/>
 <path d="M2300 1755 L2293.5 1760.8 L2300 1766.5" stroke="#999" stroke-width="2" fill="none" stroke-linecap="round" stroke-linejoin="round"/>
 <path d="M2659.5 1755 L2666 1760.8 L2659.5 1766.5" stroke="#333" stroke-width="2.2" fill="none" stroke-linecap="round" stroke-linejoin="round"/>
 <path d="M2736 1755 L2745.5 1761 L2736 1767 Z" fill="#333"/>
 <path d="M2748 1755 V1767" stroke="#333" stroke-width="2.2"/>
</svg>
<div class="a" style="left:2804px;top:870px;width:90px;height:218px;background:#fff;border-radius:8px 0 0 8px;box-shadow:0 0 10px rgba(0,0,0,0.1)"></div>
<div class="t" style="left:2843px;top:977.5px;font-size:31px;color:#1b5b9c;transform:translate(-50%,-50%) rotate(-90deg);letter-spacing:0.3px">Feedback</div>

</div>
</body></html>
